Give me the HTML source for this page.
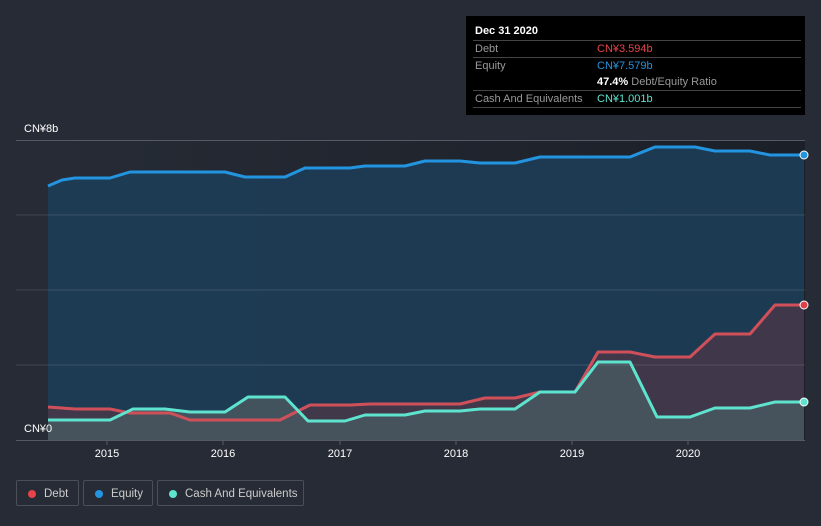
<!DOCTYPE html>
<html><head><meta charset="utf-8"><style>
body{margin:0;width:821px;height:526px;background:#262b35;font-family:"Liberation Sans",sans-serif;overflow:hidden;position:relative}
.tt{position:absolute;left:466px;top:16px;width:339px;height:99px;background:#000;color:#fff;font-size:11px}
.tt .h{position:absolute;left:9px;top:9px;font-weight:bold}
.row{position:absolute;left:7px;width:328px;border-top:1px solid #444;height:16px;line-height:16px}
.row .l{position:absolute;left:2px;color:#999}
.row .v{position:absolute;left:124px}
.leg{position:absolute;top:480px;height:26px;border:1px solid #4a4f5a;border-radius:2px;color:#ccc;font-size:11.5px;line-height:26px;box-sizing:border-box}
.leg i{position:absolute;left:11px;top:9px;width:8px;height:8px;border-radius:50%}
.leg span{position:absolute;left:27px}
</style></head><body>
<svg width="821" height="526" style="position:absolute;left:0;top:0">
<defs><linearGradient id="bgg" x1="0" x2="1"><stop offset="0" stop-color="#262b35"/><stop offset="1" stop-color="#161a22"/></linearGradient></defs>
<rect x="48" y="140" width="757" height="300" fill="url(#bgg)" opacity="0.7"/>
<path d="M48,186 L62,180 L75,178 L110,178 L130,172 L225,172 L245,177 L285,177 L305,168 L350,168 L365,166 L405,166 L425,161 L460,161 L480,163 L515,163 L540,157 L630,157 L655,147 L695,147 L715,151 L750,151 L770,155 L804,155 L804,440 L48,440Z" fill="#1e3d58" opacity="0.9"/>
<path d="M48,407 L75,409 L110,409 L130,413 L170,413 L190,420 L280,420 L310,405 L350,405 L370,404 L460,404 L485,398 L515,398 L540,392 L575,392 L598,352 L630,352 L655,357 L690,357 L715,334 L750,334 L775,305 L804,305 L804,440 L48,440Z" fill="#4a3848" opacity="0.8"/>
<path d="M48,420 L110,420 L133,409 L165,409 L190,412 L225,412 L248,397 L285,397 L308,421 L345,421 L365,415 L405,415 L425,411 L460,411 L480,409 L515,409 L540,392 L575,392 L598,362 L630,362 L657,417 L690,417 L715,408 L750,408 L775,402 L804,402 L804,440 L48,440Z" fill="#47575e" opacity="0.9"/>
<g stroke="#ffffff" stroke-opacity="0.12"><line x1="16" y1="215" x2="805" y2="215"/><line x1="16" y1="290" x2="805" y2="290"/><line x1="16" y1="365" x2="805" y2="365"/></g>
<line x1="16" y1="140.5" x2="805" y2="140.5" stroke="#555b66"/>
<line x1="16" y1="440.5" x2="805" y2="440.5" stroke="#555b66"/>
<g stroke="#555b66"><line x1="107" y1="440" x2="107" y2="445"/><line x1="223" y1="440" x2="223" y2="445"/><line x1="340" y1="440" x2="340" y2="445"/><line x1="456" y1="440" x2="456" y2="445"/><line x1="572" y1="440" x2="572" y2="445"/><line x1="688" y1="440" x2="688" y2="445"/></g>
<g fill="none" stroke-width="3" stroke-linejoin="round">
<path d="M48,186 L62,180 L75,178 L110,178 L130,172 L225,172 L245,177 L285,177 L305,168 L350,168 L365,166 L405,166 L425,161 L460,161 L480,163 L515,163 L540,157 L630,157 L655,147 L695,147 L715,151 L750,151 L770,155 L804,155" stroke="#2394df"/>
<path d="M48,407 L75,409 L110,409 L130,413 L170,413 L190,420 L280,420 L310,405 L350,405 L370,404 L460,404 L485,398 L515,398 L540,392 L575,392 L598,352 L630,352 L655,357 L690,357 L715,334 L750,334 L775,305 L804,305" stroke="#d0505a"/>
<path d="M48,420 L110,420 L133,409 L165,409 L190,412 L225,412 L248,397 L285,397 L308,421 L345,421 L365,415 L405,415 L425,411 L460,411 L480,409 L515,409 L540,392 L575,392 L598,362 L630,362 L657,417 L690,417 L715,408 L750,408 L775,402 L804,402" stroke="#5ee3cf"/>
</g>
<circle cx="804" cy="155" r="4" fill="#2394df" stroke="#fff"/>
<circle cx="804" cy="305" r="4" fill="#e04048" stroke="#fff"/>
<circle cx="804" cy="402" r="4" fill="#5ee3cf" stroke="#fff"/>
<g fill="#fff" font-size="11" font-family="Liberation Sans" text-anchor="middle">
<text x="107" y="457">2015</text><text x="223" y="457">2016</text><text x="340" y="457">2017</text><text x="456" y="457">2018</text><text x="572" y="457">2019</text><text x="688" y="457">2020</text></g>
<text x="24" y="132" fill="#fff" font-size="11" font-family="Liberation Sans">CN¥8b</text>
<text x="24" y="432" fill="#fff" font-size="11" font-family="Liberation Sans">CN¥0</text>
</svg>
<div class="tt"><div class="h">Dec 31 2020</div>
<div class="row" style="top:24px"><span class="l">Debt</span><span class="v" style="color:#e8424a">CN¥3.594b</span></div>
<div class="row" style="top:41px"><span class="l">Equity</span><span class="v" style="color:#2394df">CN¥7.579b</span></div>
<div class="row" style="top:58px;border:0"><span class="v"><b>47.4%</b> <span style="color:#999">Debt/Equity Ratio</span></span></div>
<div class="row" style="top:74px"><span class="l">Cash And Equivalents</span><span class="v" style="color:#5ee3cf">CN¥1.001b</span></div>
<div class="row" style="top:91px;height:0"></div>
</div>
<div class="leg" style="left:16px;width:63px"><i style="background:#e8424a"></i><span>Debt</span></div>
<div class="leg" style="left:83px;width:70px"><i style="background:#2394df"></i><span>Equity</span></div>
<div class="leg" style="left:157px;width:147px"><i style="background:#5ee3cf"></i><span>Cash And Equivalents</span></div>
</body></html>
